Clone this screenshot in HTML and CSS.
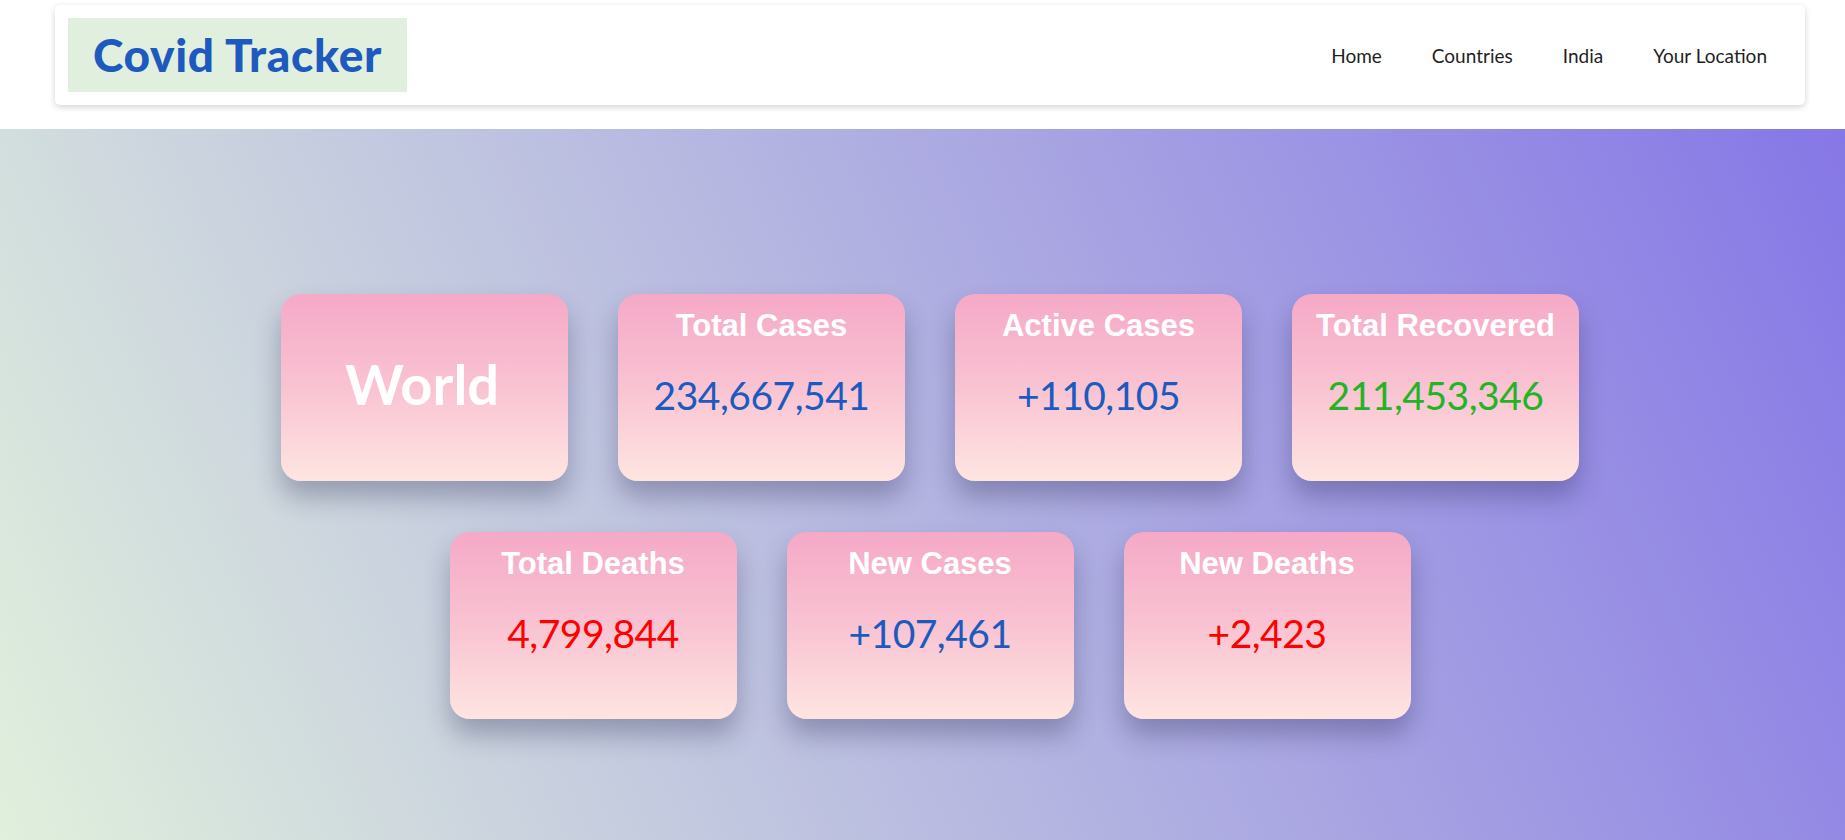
FILE: index.html
```html
<!DOCTYPE html>
<html lang="en">
<head>
<meta charset="utf-8">
<title>Covid Tracker</title>
<link rel="stylesheet" href="styles.css">
</head>
<body>
<header class="site-header">
  <nav class="nav-card">
    <div class="brand">Covid Tracker</div>
    <ul class="nav-links">
      <li><a href="#">Home</a></li>
      <li><a href="#">Countries</a></li>
      <li><a href="#">India</a></li>
      <li><a href="#">Your Location</a></li>
    </ul>
  </nav>
</header>
<main class="hero">
  <div class="cards">
    <div class="card card-world"><span class="world">World</span></div>
    <div class="card"><h3 class="card-title">Total Cases</h3><p class="card-value blue">234,667,541</p></div>
    <div class="card"><h3 class="card-title">Active Cases</h3><p class="card-value blue">+110,105</p></div>
    <div class="card"><h3 class="card-title">Total Recovered</h3><p class="card-value green">211,453,346</p></div>
    <div class="card"><h3 class="card-title">Total Deaths</h3><p class="card-value red">4,799,844</p></div>
    <div class="card"><h3 class="card-title">New Cases</h3><p class="card-value blue">+107,461</p></div>
    <div class="card"><h3 class="card-title">New Deaths</h3><p class="card-value red">+2,423</p></div>
  </div>
</main>
</body>
</html>
```

FILE: styles.css
```css
* { box-sizing: border-box; }

html, body {
  margin: 0;
  padding: 0;
  background: #ffffff;
  font-family: Lato, "Open Sans", sans-serif;
}

body {
  height: 840px;
  overflow: hidden;
}

.site-header {
  background: #ffffff;
  padding: 5px 40px 24px 55px;
  height: 129px;
}

.nav-card {
  height: 100px;
  background: #ffffff;
  border-radius: 5px;
  box-shadow: 0 2px 6px rgba(0, 0, 0, 0.18);
  padding: 13px 13px 13px 13px;
  display: flex;
  align-items: center;
  justify-content: space-between;
}

.brand {
  height: 74px;
  width: 339px;
  background: #e1f0de;
  color: #1d59be;
  font-family: Lato, sans-serif;
  font-weight: 900;
  font-size: 46px;
  letter-spacing: 0.7px;
  display: flex;
  align-items: center;
  justify-content: center;
  padding-bottom: 2px;
}

.nav-links {
  list-style: none;
  margin: 0;
  padding: 0;
  display: flex;
  align-items: center;
}

.nav-links li a {
  display: block;
  padding: 0 25px;
  color: #1f1f1f;
  text-decoration: none;
  font-size: 19px;
}

.hero {
  height: 711px;
  background: linear-gradient(65deg, #e0f0dc 0%, #8677e6 100%);
  padding: 165px 0 0 15px;
}

.cards {
  width: 1298px;
  margin: 0 auto;
  display: flex;
  flex-wrap: wrap;
  justify-content: center;
  gap: 51px 50px;
}

.card {
  width: 287px;
  height: 187px;
  border-radius: 20px;
  background: linear-gradient(to bottom, #f5a9c7 0%, #f9c3d2 50%, #fee5e1 100%);
  box-shadow: 0 16px 26px rgba(30, 30, 70, 0.3);
  display: flex;
  flex-direction: column;
  align-items: center;
  padding-top: 14px;
}

.card-world {
  justify-content: center;
  padding-top: 0;
}

.world {
  color: #ffffff;
  font-family: Lato, sans-serif;
  font-weight: 700;
  font-size: 56px;
  line-height: 1;
  margin-top: -8px;
  margin-right: 5px;
}

.card-title {
  margin: 0;
  color: #ffffff;
  font-family: "Liberation Sans", Arial, sans-serif;
  font-weight: 700;
  font-size: 31px;
  line-height: 36px;
}

.card-value {
  margin: 28px 0 0 0;
  font-family: Lato, sans-serif;
  font-weight: 400;
  font-size: 39px;
  line-height: 46px;
  letter-spacing: -0.5px;
}

.blue { color: #1b5bbf; }
.green { color: #22b424; }
.red { color: #ff0000; }
```
